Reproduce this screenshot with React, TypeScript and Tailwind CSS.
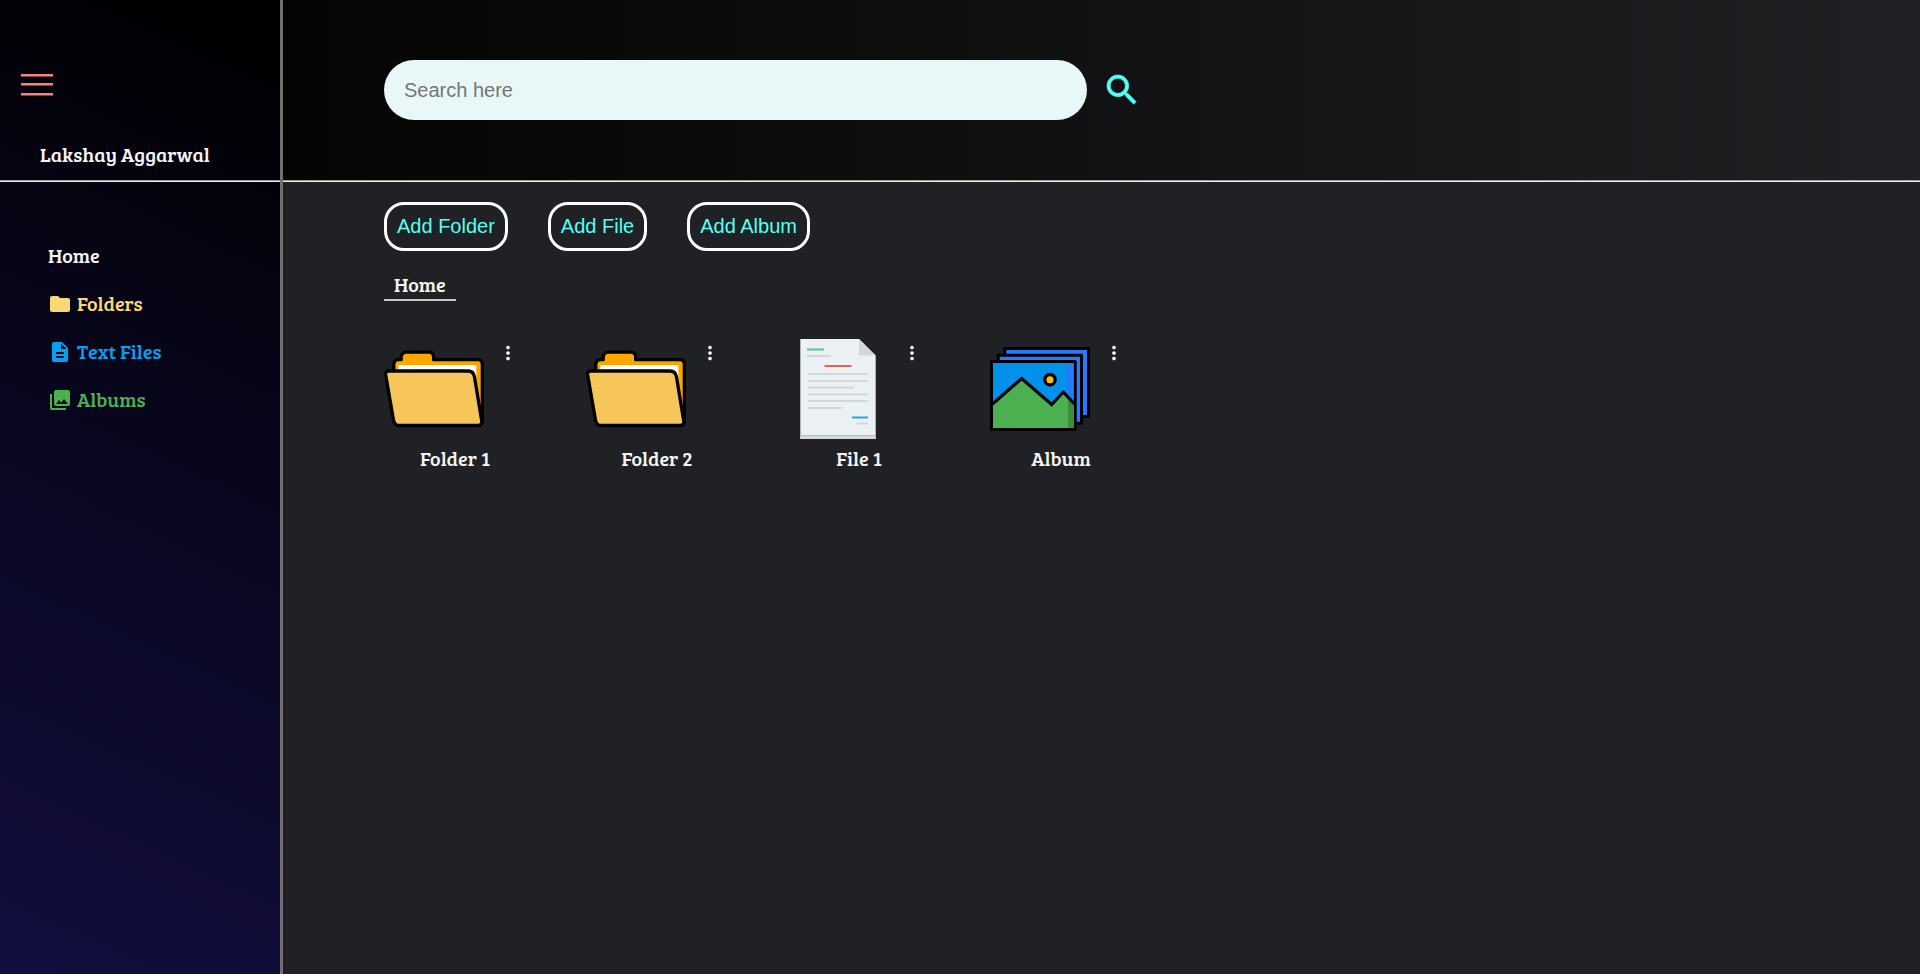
import React from "react";
import { MdDescription, MdFolder, MdMoreVert, MdPhotoLibrary } from "react-icons/md";

const serif = "font-['Bree_Serif','DejaVu_Serif_Condensed','DejaVu_Serif',serif]";

function SearchIcon() {
  return (
    <svg viewBox="0 0 24 24" className="h-10 w-10" aria-hidden="true">
      <path
        d="M15.500 14h-.79l-.28-.27C15.410 12.590 16 11.110 16 9.500 16 5.910 13.090 3 9.500 3S3 5.910 3 9.500 5.910 16 9.500 16c1.610 0 3.090-.59 4.230-1.570l.27.28v.79l5 4.990L20.490 19l-4.990-5zm-6 0C7.010 14 5 11.990 5 9.500S7.010 5 9.500 5 14 7.010 14 9.500 11.990 14 9.500 14z"
        fill="currentColor"
        stroke="currentColor"
        strokeWidth="0.4"
        strokeLinejoin="round"
      />
    </svg>
  );
}

function FolderPicture() {
  return (
    <svg viewBox="0 0 100 100" className="h-[100px] w-[100px]" aria-hidden="true">
      <path d="M9.800 36V25.500Q10 21 14 20.700H17.200V17.500Q18.500 13.300 22 13.200H45Q49 13.300 49.600 17.500V20.700H94.500Q98.300 21 98.300 25V83H20Z" fill="#ffa500" stroke="#000" strokeWidth="3.200" strokeLinejoin="round" />
      <path d="M14.300 34V26H92.300V62L86 40Z" fill="#fff" />
      <path d="M4.500 32H84Q89.500 32 90.500 38L97.800 82.500Q98 86.500 94 86.500H15Q10.500 86.500 9.500 81L1.700 36Q1.200 32 4.500 32Z" fill="#f6c65b" stroke="#000" strokeWidth="3.300" />
    </svg>
  );
}

function FilePicture() {
  return (
    <svg viewBox="0 0 100 100" className="h-[100px] w-[100px]" aria-hidden="true">
      <path d="M12.300 0H71L87.700 16.500V100H12.300Z" fill="#ebf0f3" />
      <path d="M71 0L87.700 16.500H71Z" fill="#d5d6db" />
      <path d="M12.300 96H87.700V100H12.300Z" fill="#d5d6db" />
      <path d="M12.300 96.500H87.700" stroke="#b8babd" />
      <path d="M19 10.500H36" stroke="#4fc9a0" strokeWidth="2" />
      <path d="M36.500 27H63.500" stroke="#e56353" strokeWidth="2" />
      <path d="M64 78.500H80" stroke="#2ca7df" strokeWidth="2" />
      <path d="M19 17H43M20 35H80M20 42H80M20 48.500H66M20 55.500H80M20 62H80M20 69H54M69 84.500H80" stroke="#d5d6db" strokeWidth="2" />
    </svg>
  );
}

function AlbumPicture() {
  return (
    <svg viewBox="0 0 100 100" className="h-[100px] w-[100px]" aria-hidden="true">
      <g stroke="#000" strokeWidth="3" strokeLinejoin="round">
        <path d="M14.800 9.500H98.500V77.500H14.800Z" fill="#2979ff" />
        <path d="M8.200 16.200H91.500V84.200H8.200Z" fill="#2979ff" />
        <path d="M1.500 22.500H85.200V90.500H1.500Z" fill="#0091ea" />
      </g>
      <path d="M78 24H83.700V66H78Z" fill="#2979ff" />
      <path d="M3 64.500L31.700 39.500L61.700 65.500L73.300 53L83.700 64.500V89H3Z" fill="#4caf50" />
      <path d="M78 58L83.700 64.500V89H78Z" fill="#388e3c" />
      <path d="M2.500 65L31.700 39.500L61.700 65.500L73.300 53L84.500 65" fill="none" stroke="#000" strokeWidth="3.200" />
      <circle cx="60" cy="40.700" r="5.200" fill="#ffc107" stroke="#000" strokeWidth="3.300" />
    </svg>
  );
}

function Divider() {
  return <hr className="h-0.5 border-t border-b border-t-[#9a9a9a] border-b-[#eeeeee]" />;
}

const navItems = [
  { label: "Folders", Icon: MdFolder, color: "text-[#fcd776]" },
  { label: "Text Files", Icon: MdDescription, color: "text-[#03a0f3]" },
  { label: "Albums", Icon: MdPhotoLibrary, color: "text-[#4caf50]" },
];

const items = [
  { name: "Folder 1", Picture: FolderPicture },
  { name: "Folder 2", Picture: FolderPicture },
  { name: "File 1", Picture: FilePicture },
  { name: "Album", Picture: AlbumPicture },
];

export default function App() {
  return (
    <div className={`flex min-h-screen bg-[#202124] text-[20px] leading-6 text-[#f5f5f5] ${serif}`}>
      <aside className="w-[283px] shrink-0 border-r-[3px] border-[#707070] bg-linear-[205deg] from-black to-[#120e40]">
        <div className="flex h-[180px] flex-col justify-between pt-[68px] pb-3.5">
          <button type="button" aria-label="Toggle menu" className="ml-5 w-8 text-[#f88080]">
            <svg viewBox="0 0 34 34" className="h-[34px] w-[34px]" aria-hidden="true">
              <path d="M1 7.200H33M1 16.200H33M1 26.200H33" stroke="currentColor" strokeWidth="2.400" />
            </svg>
          </button>
          <p className="pl-10">Lakshay Aggarwal</p>
        </div>
        <Divider />
        <nav className="flex flex-col gap-6 px-12 pt-[62px] leading-[22px]">
          <a href="#home" className="h-6">Home</a>
          {navItems.map(({ label, Icon, color }) => (
            <a key={label} href="#" className={`flex items-start gap-[5px] ${color}`}>
              <Icon className="h-6 w-6" />
              {label}
            </a>
          ))}
        </nav>
      </aside>

      <div className="min-w-0 flex-1">
        <header className="h-[180px] bg-linear-to-r from-[#050505] to-[#202124] pt-[60px] pl-[101px]">
          <form className="flex items-center gap-[15px]">
            <input
              type="search"
              aria-label="Search"
              placeholder="Search here"
              className="h-[60px] max-w-[703px] min-w-0 flex-1 rounded-[30px] bg-[#e8f8f8] px-5 font-['Liberation_Sans',Arial,sans-serif] text-[20px] text-black placeholder:text-[#757575]"
            />
            <button type="button" aria-label="Run search" className="text-[#55fff5]">
              <SearchIcon />
            </button>
          </form>
        </header>
        <Divider />

        <main className="pt-5 pl-[101px]">
          <div className="flex gap-10">
            {["Add Folder", "Add File", "Add Album"].map((label) => (
              <button
                key={label}
                type="button"
                className="rounded-[20px] border-[3px] border-white p-2.5 font-['Liberation_Sans',Arial,sans-serif] text-[20px] leading-[23px] text-[#55fff5]"
              >
                {label}
              </button>
            ))}
          </div>

          <nav aria-label="Breadcrumb" className="mt-[18px] flex">
            <a href="#home" className="border-b-2 border-[#c8c8c8] px-2.5 py-[3px]">Home</a>
          </nav>

          <ul className="mt-[38px] flex flex-wrap gap-[60px]">
            {items.map(({ name, Picture }) => (
              <li key={name} className="w-[142px]">
                <div className="flex items-start gap-[13px]">
                  <Picture />
                  <button type="button" aria-label={`Options for ${name}`} className="mt-[3px] text-white">
                    <MdMoreVert className="h-[22px] w-[22px]" />
                  </button>
                </div>
                <p className="mt-[7px] text-center">{name}</p>
              </li>
            ))}
          </ul>
        </main>
      </div>
    </div>
  );
}
